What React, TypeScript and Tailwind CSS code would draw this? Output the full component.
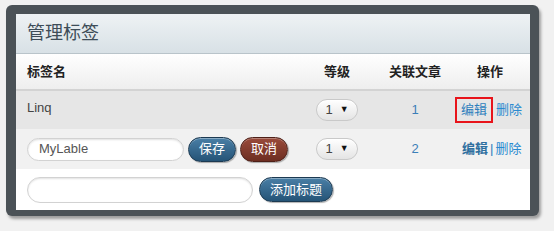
import React from 'react';

const cjk = { fontFamily: '"Liberation Sans", "Noto Sans CJK SC", sans-serif' };

const LevelSelect: React.FC<{ value: string }> = ({ value }) => (
  <div className="mx-auto flex h-[22px] w-[42px] items-center justify-center gap-[7px] rounded-full border border-[#c9c9c9] bg-gradient-to-b from-white to-[#e4e4e4] text-[13px] text-[#444] shadow-[inset_0_1px_0_#fff]">
    <span>{value}</span>
    <span className="text-[9px] text-[#111]">▼</span>
  </div>
);

const Ops: React.FC<{ boxed?: boolean }> = ({ boxed }) => (
  <div className="flex items-center whitespace-nowrap text-[13px]">
    {boxed ? (
      <span className="-ml-[3px] border-2 border-[#e8141b] px-[4px] py-[1px] text-[#2f7fbd]">编辑</span>
    ) : (
      <span className="ml-[4px] font-bold text-[#2f6f9f]">编辑</span>
    )}
    {!boxed && <span className="mx-[2px] text-[#2f7fbd]">|</span>}
    <span className={boxed ? 'ml-[3px] text-[#2a8ad0]' : 'text-[#2a8ad0]'}>删除</span>
  </div>
);

const Btn: React.FC<{ color: 'blue' | 'red'; children: React.ReactNode }> = ({ color, children }) => (
  <button
    className={
      color === 'blue'
        ? 'h-[25px] whitespace-nowrap rounded-full border border-[#1c3a52] bg-gradient-to-b from-[#4a7fa6] to-[#255477] px-[10px] text-[13px] text-white shadow-[inset_0_1px_0_rgba(255,255,255,0.35),1px_1px_1px_rgba(0,0,0,0.3)]'
        : 'h-[25px] whitespace-nowrap rounded-full border border-[#4e2018] bg-gradient-to-b from-[#9a4b3b] to-[#6d2e22] px-[10px] text-[13px] text-white shadow-[inset_0_1px_0_rgba(255,255,255,0.3),1px_1px_1px_rgba(0,0,0,0.3)]'
    }
  >
    {children}
  </button>
);

const cols = 'grid grid-cols-[275px_70px_86px_72px] items-center pl-[11px]';

export default function App() {
  return (
    <div className="h-[231px] w-[554px] bg-[#f1f1f1] pl-[6px] pt-[5px]" style={cjk}>
      <div className="h-[211px] w-[533px] rounded-[6px] bg-[#4b5257] pb-[6px] pl-[10px] pr-[9px] pt-[9px] shadow-[2px_3px_3px_rgba(0,0,0,0.35)]">
        <div className="flex h-full flex-col overflow-hidden bg-white">
          <div className="flex h-[40px] shrink-0 items-center border-b border-[#b9c4ca] bg-gradient-to-b from-[#eef2f4] to-[#d8e1e6] pl-[11px] text-[18px] text-[#3e4d58]">
            管理标签
          </div>

          <div className={`${cols} h-[37px] shrink-0 border-b-2 border-[#d3d3d3] bg-gradient-to-b from-white to-[#eeeeee] text-[13px] font-bold text-[#222]`}>
            <div>标签名</div>
            <div className="text-center">等级</div>
            <div className="text-center">关联文章</div>
            <div className="pl-[19px]">操作</div>
          </div>

          <div className={`${cols} h-[38px] shrink-0 bg-[#e6e6e6] text-[13px] text-[#444]`}>
            <div className="-mt-[4px]">Linq</div>
            <LevelSelect value="1" />
            <div className="text-center text-[#3b7fb8]">1</div>
            <Ops boxed />
          </div>

          <div className={`${cols} h-[40px] shrink-0 bg-[#f1f1f1] text-[13px]`}>
            <div className="flex items-center gap-[4px]">
              <div className="flex h-[23px] w-[157px] items-center rounded-full border border-[#d2d2d2] bg-white pl-[11px] text-[#555] shadow-[inset_0_1px_2px_rgba(0,0,0,0.12)]">
                MyLable
              </div>
              <Btn color="blue">保存</Btn>
              <Btn color="red">取消</Btn>
            </div>
            <LevelSelect value="1" />
            <div className="text-center text-[#3b7fb8]">2</div>
            <Ops />
          </div>

          <div className="flex flex-1 items-center gap-[6px] bg-white pl-[11px]">
            <div className="h-[26px] w-[226px] rounded-full border border-[#d2d2d2] bg-white shadow-[inset_0_1px_2px_rgba(0,0,0,0.12)]" />
            <Btn color="blue">添加标题</Btn>
          </div>
        </div>
      </div>
    </div>
  );
}
